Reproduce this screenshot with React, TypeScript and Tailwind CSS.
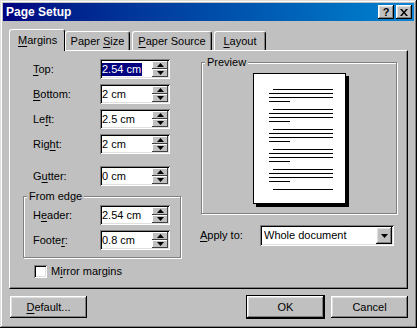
import React from 'react';

const raised =
  'bg-[#c0c0c0] shadow-[inset_-1px_-1px_0_#000,inset_1px_1px_0_#fff,inset_-2px_-2px_0_#808080,inset_2px_2px_0_#dfdfdf]';
const sunken =
  'bg-white shadow-[inset_1px_1px_0_#808080,inset_-1px_-1px_0_#fff,inset_2px_2px_0_#000,inset_-2px_-2px_0_#dfdfdf]';

const Acc: React.FC<{ t: string; i: number }> = ({ t, i }) => (
  <span className="whitespace-pre">
    {t.slice(0, i)}
    <span className="underline underline-offset-[2px]">{t[i]}</span>
    {t.slice(i + 1)}
  </span>
);

const Tri: React.FC<{ up?: boolean }> = ({ up }) => (
  <svg width="7" height="4" viewBox="0 0 7 4">
    <polygon points={up ? '3.5,0 7,4 0,4' : '0,0 7,0 3.5,4'} fill="#000" />
  </svg>
);

const SpinField: React.FC<{ value: string; selected?: boolean }> = ({ value, selected }) => (
  <div className={`flex h-[20px] w-[70px] items-center pl-[2px] ${sunken}`}>
    <span className={selected ? 'bg-[#000080] pr-px leading-[13px] text-white' : 'leading-[13px]'}>{value}</span>
    <div className="ml-auto mr-[2px] flex h-[16px] w-[16px] flex-col">
      <div className="flex h-[8px] items-center justify-center bg-[#c0c0c0] shadow-[inset_-1px_-1px_0_#404040,inset_1px_1px_0_#fff]">
        <Tri up />
      </div>
      <div className="flex h-[8px] items-center justify-center bg-[#c0c0c0] shadow-[inset_-1px_-1px_0_#404040,inset_1px_1px_0_#fff]">
        <Tri />
      </div>
    </div>
  </div>
);

const Row: React.FC<{ label: React.ReactNode; value: string; selected?: boolean }> = ({ label, value, selected }) => (
  <div className="flex h-[20px] items-center pl-[10px]">
    <span className="w-[67px]">{label}</span>
    <SpinField value={value} selected={selected} />
  </div>
);

const tabs = [
  { t: 'Paper Size', i: 6, w: 'w-[65px]' },
  { t: 'Paper Source', i: 0, w: 'w-[80px]' },
  { t: 'Layout', i: 0, w: 'w-[52px]' },
];

const Btn: React.FC<{ children: React.ReactNode; def?: boolean }> = ({ children, def }) => (
  <div
    className={`flex h-[22px] w-[77px] items-center justify-center ${raised} ${def ? 'outline outline-1 outline-black' : ''}`}
  >
    {children}
  </div>
);

export default function App() {
  const groups = [0, 1, 2, 3, 4];
  return (
    <div
      className="flex h-[328px] w-[417px] flex-col bg-[#c0c0c0] text-[11px] leading-[13px] text-black shadow-[inset_-1px_-1px_0_#000,inset_1px_1px_0_#dfdfdf,inset_-2px_-2px_0_#808080,inset_2px_2px_0_#fff]"
      style={{ fontFamily: '"Liberation Sans", Arial, sans-serif' }}
    >
      {/* title bar */}
      <div className="mx-[3px] mt-[3px] flex h-[18px] items-center bg-gradient-to-r from-[#000080] to-[#1084d0] pl-[3px] pr-[2px]">
        <span className="text-[12px] font-bold text-white">Page Setup</span>
        <div className="ml-auto flex gap-[2px]">
          <div className={`flex h-[14px] w-[16px] items-center justify-center text-[11px] font-bold ${raised}`}>?</div>
          <div className={`flex h-[14px] w-[16px] items-center justify-center ${raised}`}>
            <svg width="8" height="7" viewBox="0 0 8 7">
              <path d="M0 0h2l2 2.5L6 0h2L5 3.5 8 7H6L4 4.5 2 7H0l3-3.5z" fill="#000" />
            </svg>
          </div>
        </div>
      </div>

      <div className="flex flex-1 flex-col px-[9px] pt-[8px]">
        {/* tabs */}
        <div className="flex h-[21px] items-end">
          <div className="relative z-10 -mb-px flex h-[22px] w-[56px] items-start rounded-t-[3px] border-l border-t border-r border-l-white border-t-white border-r-black bg-[#c0c0c0] pl-[8px] pt-[4px]">
            <Acc t="Margins" i={0} />
          </div>
          {tabs.map((tb, k) => (
            <div
              key={tb.t}
              className={`flex h-[19px] ${tb.w} ${k > 0 ? 'ml-[2px]' : ''} items-start justify-center rounded-t-[3px] border-l border-t border-r border-l-white border-t-white border-r-black pt-[3px] shadow-[inset_-1px_0_0_#808080]`}
            >
              <Acc t={tb.t} i={tb.i} />
            </div>
          ))}
        </div>

        {/* panel */}
        <div className="flex h-[239px] border border-l-white border-t-white border-r-black border-b-black shadow-[inset_-1px_-1px_0_#808080]">
          {/* left column */}
          <div className="flex w-[191px] flex-col pl-[13px] pt-[8px]">
            <div className="flex flex-col gap-[5px]">
              <Row label={<Acc t="Top:" i={0} />} value="2.54 cm" selected />
              <Row label={<Acc t="Bottom:" i={0} />} value="2 cm" />
              <Row label={<Acc t="Left:" i={2} />} value="2.5 cm" />
              <Row label={<Acc t="Right:" i={3} />} value="2 cm" />
            </div>
            <div className="mt-[12px]">
              <Row label={<Acc t="Gutter:" i={1} />} value="0 cm" />
            </div>
            <fieldset className="mt-[4px] w-[158px] border border-[#808080] pb-[7px] shadow-[inset_1px_1px_0_#fff,1px_1px_0_#fff]">
              <legend className="ml-[3px] bg-[#c0c0c0] px-[2px]">From edge</legend>
              <div className="mt-[2px] flex flex-col gap-[5px]">
                <div className="-ml-px">
                  <Row label={<Acc t="Header:" i={1} />} value="2.54 cm" />
                </div>
                <div className="-ml-px">
                  <Row label={<Acc t="Footer:" i={5} />} value="0.8 cm" />
                </div>
              </div>
            </fieldset>
            <div className="mt-[7px] flex items-center pl-[11px]">
              <div className={`h-[13px] w-[13px] ${sunken}`} />
              <span className="ml-[4px]">
                <Acc t="Mirror margins" i={1} />
              </span>
            </div>
          </div>

          {/* right column */}
          <div className="flex w-[196px] flex-col pt-[5px]">
            <fieldset className="h-[158px] border border-[#808080] shadow-[inset_1px_1px_0_#fff,1px_1px_0_#fff]">
              <legend className="ml-[3px] bg-[#c0c0c0] px-[2px]">Preview</legend>
              <div className="flex justify-center pt-[4px]">
                <div className="flex h-[131px] w-[93px] flex-col gap-[7px] border border-black bg-white pl-[15px] pt-[15px] shadow-[3px_3px_0_#000]">
                  {groups.map((g) => (
                    <div key={g} className="flex flex-col gap-[3px]">
                      <div className="ml-[4px] h-px w-[60px] bg-black" />
                      <div className="h-px w-[64px] bg-black" />
                      <div className="h-px w-[64px] bg-black" />
                      <div className="h-px w-[21px] bg-black" />
                    </div>
                  ))}
                  <div className="ml-[4px] h-px w-[60px] bg-black" />
                </div>
              </div>
            </fieldset>
            <div className="mt-[11px] flex items-center">
              <span className="ml-[-1px] w-[60px]">
                <Acc t="Apply to:" i={0} />
              </span>
              <div className={`flex h-[21px] w-[134px] items-center pl-[4px] ${sunken}`}>
                <span>Whole document</span>
                <div className={`ml-auto mr-[2px] flex h-[17px] w-[16px] items-center justify-center ${raised}`}>
                  <Tri />
                </div>
              </div>
            </div>
          </div>
        </div>

        {/* buttons */}
        <div className="mt-[7px] flex">
          <div className="ml-px">
            <Btn>
              <Acc t="Default..." i={0} />
            </Btn>
          </div>
          <div className="ml-auto flex gap-[7px]">
            <Btn def>OK</Btn>
            <Btn>Cancel</Btn>
          </div>
        </div>
      </div>
    </div>
  );
}
